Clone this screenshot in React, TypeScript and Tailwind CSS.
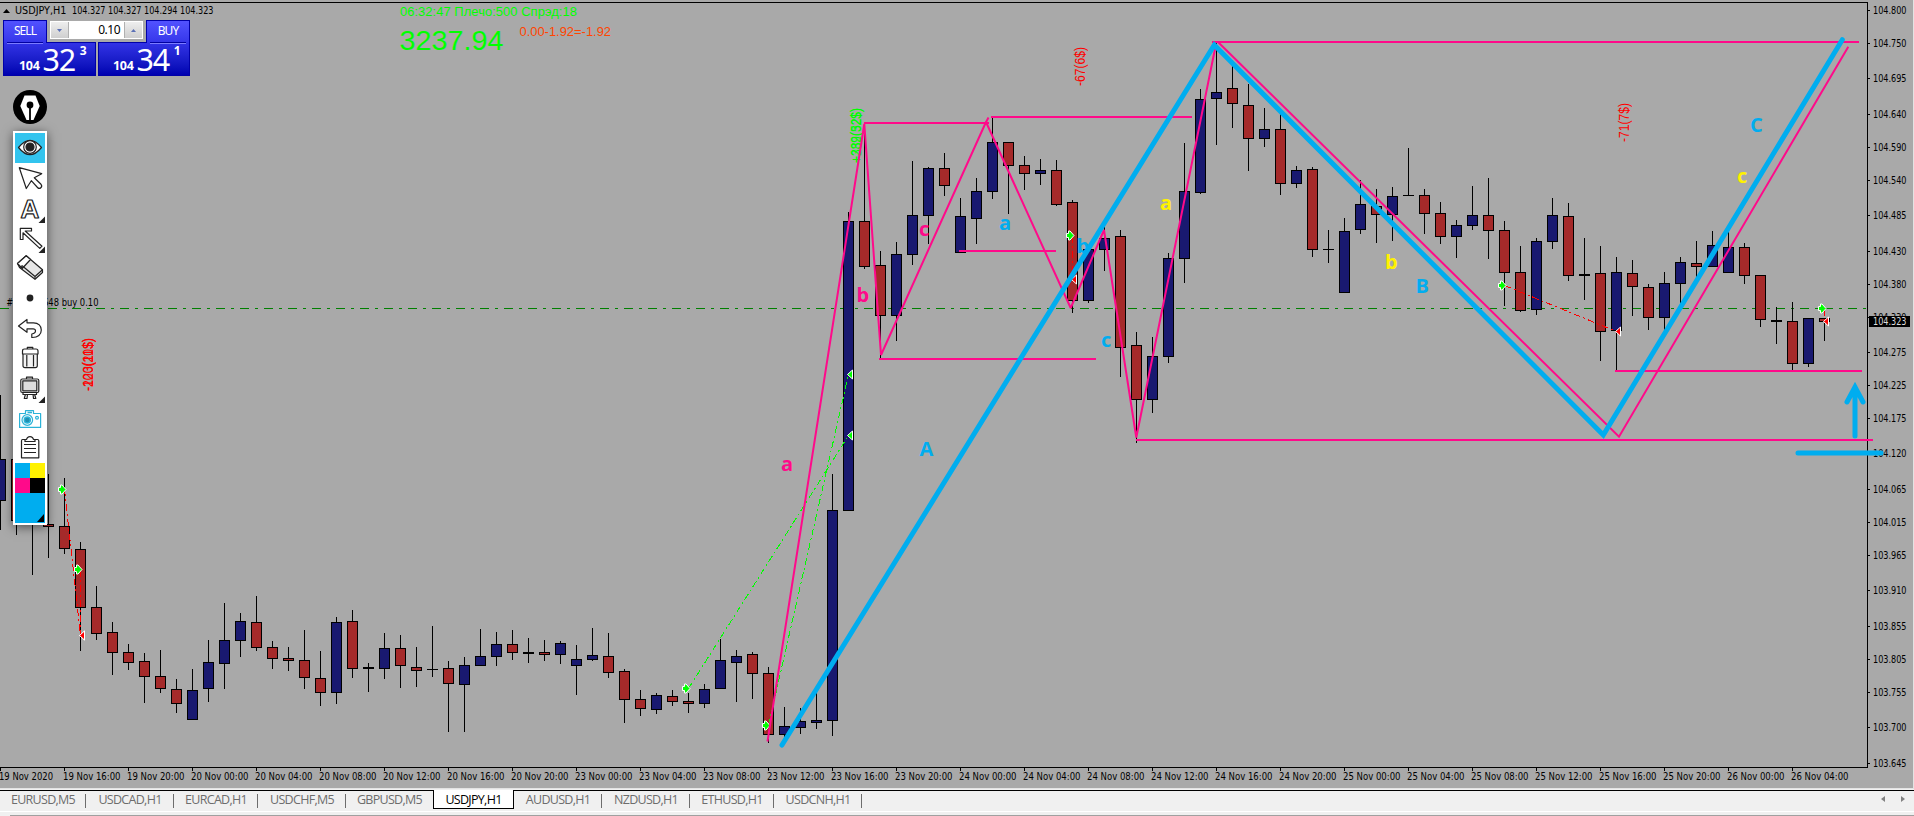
import type { ReactNode } from 'react';

type Candle = [high: number, top: number, bottom: number, low: number, up: 0 | 1];

const STEP = 16;

// one entry per hour, y values in chart pixels
const candles: Candle[] = [
  [395, 459, 501, 530, 1], [459, 459, 521, 535, 0], [470, 500, 520, 575, 0], [474, 524, 527, 558, 0],
  [478, 526, 549, 554, 0], [542, 549, 608, 651, 0], [586, 607, 634, 640, 0], [622, 632, 653, 675, 0],
  [644, 652, 663, 670, 0], [653, 661, 677, 703, 0], [650, 676, 689, 693, 0], [679, 689, 704, 713, 0],
  [669, 690, 720, 720, 1], [640, 662, 689, 702, 1], [603, 640, 664, 689, 1], [613, 621, 641, 657, 1],
  [596, 622, 648, 651, 0], [641, 647, 659, 669, 0], [647, 658, 661, 671, 0], [630, 660, 678, 689, 0],
  [651, 678, 693, 706, 0], [617, 622, 693, 704, 1], [610, 621, 669, 678, 0], [663, 667, 669, 692, 0],
  [633, 648, 669, 679, 1], [635, 648, 666, 688, 0], [647, 667, 671, 687, 0], [626, 669, 670, 677, 0],
  [661, 668, 684, 732, 0], [657, 665, 685, 732, 1], [629, 656, 666, 666, 1], [632, 644, 657, 666, 1],
  [630, 644, 653, 660, 0], [638, 652, 654, 663, 0], [640, 652, 655, 661, 0], [641, 643, 655, 664, 1],
  [645, 659, 666, 695, 1], [628, 655, 660, 661, 1], [633, 656, 673, 678, 0], [669, 671, 700, 723, 0],
  [690, 699, 709, 716, 0], [693, 695, 710, 714, 1], [690, 696, 702, 706, 0], [693, 701, 704, 713, 0],
  [684, 689, 704, 708, 1], [639, 660, 689, 689, 1], [650, 656, 663, 702, 1], [652, 654, 674, 699, 0],
  [667, 673, 735, 743, 0], [707, 726, 735, 737, 1], [708, 721, 728, 734, 1], [693, 720, 723, 729, 1],
  [474, 510, 721, 736, 1], [212, 221, 511, 511, 1], [123, 221, 267, 269, 0], [251, 265, 316, 358, 0],
  [242, 254, 316, 341, 1], [161, 215, 255, 265, 1], [167, 168, 216, 244, 1], [153, 168, 186, 196, 0],
  [198, 216, 253, 253, 1], [178, 191, 219, 244, 1], [118, 142, 192, 199, 1], [142, 142, 166, 214, 0],
  [156, 165, 174, 190, 0], [159, 170, 174, 185, 1], [160, 170, 205, 206, 0], [200, 202, 301, 313, 0],
  [249, 249, 301, 303, 1], [227, 238, 250, 271, 1], [230, 236, 348, 377, 0], [332, 345, 400, 443, 0],
  [337, 356, 400, 413, 1], [253, 258, 357, 363, 1], [143, 191, 259, 283, 1], [89, 99, 193, 194, 1],
  [43, 92, 99, 145, 1], [60, 88, 104, 128, 0], [84, 105, 139, 171, 0], [108, 129, 139, 147, 1],
  [114, 129, 184, 195, 0], [166, 170, 184, 188, 1], [167, 169, 250, 257, 0], [230, 249, 250, 263, 0],
  [218, 231, 293, 293, 1], [180, 204, 230, 234, 1], [189, 206, 215, 243, 0], [187, 196, 215, 241, 1],
  [148, 195, 196, 196, 1], [189, 195, 214, 234, 0], [202, 213, 237, 244, 0], [220, 225, 237, 258, 1],
  [186, 215, 226, 230, 1], [178, 215, 231, 259, 0], [221, 230, 273, 306, 0], [246, 272, 311, 312, 0],
  [238, 241, 310, 315, 1], [198, 215, 242, 249, 1], [203, 216, 276, 281, 0], [238, 274, 276, 300, 0],
  [246, 273, 332, 361, 0], [257, 272, 331, 370, 1], [260, 273, 287, 316, 0], [284, 287, 318, 330, 0],
  [272, 283, 318, 330, 1], [257, 262, 284, 304, 1], [241, 263, 267, 277, 0], [231, 245, 267, 267, 1],
  [230, 247, 273, 273, 1], [243, 247, 276, 284, 0], [275, 275, 320, 327, 0], [307, 320, 322, 344, 0],
  [302, 321, 364, 370, 0], [318, 318, 364, 367, 1], [318, 318, 322, 341, 0],
];

const prices: [string, number][] = [
  ['104.800', 10], ['104.750', 43], ['104.695', 78], ['104.640', 114], ['104.590', 147], ['104.540', 180],
  ['104.485', 215], ['104.430', 251], ['104.380', 284], ['104.330', 317], ['104.275', 352], ['104.225', 385],
  ['104.175', 418], ['104.120', 453], ['104.065', 489], ['104.015', 522], ['103.965', 555], ['103.910', 590],
  ['103.855', 626], ['103.805', 659], ['103.755', 692], ['103.700', 727], ['103.645', 763],
];

const times = [
  '19 Nov 2020', '19 Nov 16:00', '19 Nov 20:00', '20 Nov 00:00', '20 Nov 04:00', '20 Nov 08:00', '20 Nov 12:00',
  '20 Nov 16:00', '20 Nov 20:00', '23 Nov 00:00', '23 Nov 04:00', '23 Nov 08:00', '23 Nov 12:00', '23 Nov 16:00',
  '23 Nov 20:00', '24 Nov 00:00', '24 Nov 04:00', '24 Nov 08:00', '24 Nov 12:00', '24 Nov 16:00', '24 Nov 20:00',
  '25 Nov 00:00', '25 Nov 04:00', '25 Nov 08:00', '25 Nov 12:00', '25 Nov 16:00', '25 Nov 20:00', '26 Nov 00:00',
  '26 Nov 04:00',
];

const CYAN = '#00adef';
const PINK = '#ff0a8a';
const YELLOW = '#fff200';
const LIME = '#00ff00';
const RED = '#ff0000';

const trades: [number, number, number, number, string][] = [
  [64, 489, 80, 635, RED],
  [80, 569, 80, 635, RED],
  [688, 688, 848, 435, LIME],
  [768, 725, 848, 374, LIME],
  [1072, 235, 1072, 279, RED],
  [1504, 285, 1616, 331, RED],
  [1824, 308, 1824, 321, RED],
];

const waves: [string, number, number, string][] = [
  ['a', 781, 471, PINK], ['b', 856.5, 302, PINK], ['c', 919, 236, PINK],
  ['a', 999, 230, CYAN], ['b', 1076.5, 253, CYAN], ['c', 1101, 347, CYAN],
  ['A', 919.5, 456, CYAN], ['B', 1415.5, 293, CYAN], ['C', 1750, 132, CYAN],
  ['a', 1160, 210, YELLOW], ['b', 1385, 268.5, YELLOW], ['c', 1737, 182.5, YELLOW],
];

const profits: [string, number, number, number, string][] = [
  ['-123(11$)', 93, 391, 53, RED],
  ['-200(20$)', 93, 391, 53, RED],
  ['+339(52$)', 861, 163, 55, LIME],
  ['+282(32$)', 861, 163, 55, LIME],
  ['-67(6$)', 1085, 86, 39, RED],
  ['-71(7$)', 1629, 142, 39, RED],
];

const levels = [
  'M864 123H989', 'M991 117H1192', 'M959 251H1056', 'M879 359H1096',
  'M1136 440H1873', 'M1615 371H1862', 'M1212 42H1859',
];

type LabelProps = { x: number; y: number; w: number; size?: number; fill?: string; arial?: boolean; children: string };

const Label = ({ x, y, w, size = 10, fill = '#000', arial, children }: LabelProps) => (
  <text
    x={x}
    y={y}
    textLength={w}
    lengthAdjust="spacingAndGlyphs"
    fontSize={size}
    fill={fill}
    className={arial ? "font-['Liberation_Sans',sans-serif]" : "font-['DejaVu_Sans_Condensed','Noto_Sans',sans-serif]"}
    xmlSpace="preserve"
  >
    {children}
  </text>
);

const Chart = () => (
  <svg width="1913" height="788" viewBox="0 0 1913 788" className="block">
    <path d="M0 308.5H1866" stroke="#008000" strokeDasharray="9 6 3 6" />

    <g shapeRendering="crispEdges">
      {candles.map(([high, top, bottom, low, up], i) => {
        const x = i * STEP;
        const h = bottom - top;
        return (
          <g key={i}>
            <rect x={x} y={high} width="1" height={low - high} fill="#000" />
            <rect x={x - 5} y={top} width="11" height={h} fill="#000" />
            {h > 2 && <rect x={x - 4} y={top + 1} width="9" height={h - 2} fill={up ? '#191970' : '#a52a2a'} />}
          </g>
        );
      })}
    </g>

    <Label x={6.5} y={306} w={6.5}>#</Label>
    <Label x={43} y={306} w={55.5}>648 buy 0.10</Label>

    {trades.map(([x1, y1, x2, y2, color], i) => (
      <line key={i} x1={x1 + 0.5} y1={y1 + 0.5} x2={x2 + 0.5} y2={y2 + 0.5} stroke={color} strokeDasharray="7 3 2 3" shapeRendering="crispEdges" />
    ))}
    {trades.map(([x1, y1, x2, y2, color], i) => (
      <g key={i} stroke="#fff" strokeWidth="1">
        <path d={`M${x1 - 5.5} ${y1 - 1.5}h2v-2.5h1.5l4 4.5l-4 4.5h-1.5v-2.5h-2z`} fill={LIME} />
        <path d={`M${x2 - 0.5} ${y2 + 0.5}l5 -4.5v9z`} fill={color} />
      </g>
    ))}

    {profits.map(([text, x, y, w, color], i) => (
      <g key={i} transform={`translate(${x} ${y}) rotate(-90)`}>
        <Label x={0} y={0} w={w} size={14} fill={color} arial>{text}</Label>
      </g>
    ))}

    <Label x={400} y={16} w={177} size={13} fill={LIME} arial>06:32:47 Плечо:500 Спрэд:18</Label>
    <Label x={399.5} y={50} w={104} size={28} fill={LIME} arial>3237.94</Label>
    <Label x={519.5} y={36} w={91.5} size={13} fill="#ff4500" arial>0.00-1.92=-1.92</Label>

    <g shapeRendering="crispEdges">
      <path d="M0 2.5H1867.5V767.5H0" fill="none" stroke="#000" />
      {prices.map(([, y]) => <rect key={y} x="1868" y={y} width="2" height="1" />)}
      {times.map((t, i) => <rect key={t} x={i * 64} y="768" width="1" height="3" />)}
    </g>
    {prices.map(([p, y]) => <Label key={p} x={1873} y={y + 4} w={33.5}>{p}</Label>)}
    {times.map((t, i) => <Label key={t} x={i * 64 - 1} y={780} w={i ? 57.5 : 54}>{t}</Label>)}
    <rect x="1869" y="316" width="41" height="11" />
    <Label x={1873} y={325} w={33.5} fill="#dcdcdc">104.323</Label>

    {waves.map(([t, x, y, color], i) => (
      <text key={i} x={x} y={y} fontSize="20" fill={color} className="font-['Open_Sans','Noto_Sans',sans-serif] font-bold">{t}</text>
    ))}

    <g fill="none" stroke={PINK} strokeWidth="2">
      {levels.map((d) => <path key={d} d={d} />)}
      <path d="M767.5 741.5L864.3 124L881 355L986 122L1070.7 308L1104 230L1136.3 437.5L1216 44" strokeLinejoin="bevel" />
      <path d="M985 124L988.5 117.5M1218.5 42.5L1619 436.7L1848.3 46.7" />
    </g>
    <g fill="none" stroke={CYAN} strokeWidth="5" strokeLinecap="round">
      <path d="M782 745L1214.3 45L1603.3 435L1842.3 39.7" />
      <path d="M1855 436V387M1847 402L1855 387L1863 402M1798 453H1881" />
    </g>
  </svg>
);

const QuoteSide = ({ name, pip, point, right }: { name: string; pip: string; point: string; right?: boolean }) => (
  <div className={`relative h-14 pt-[22px] ${right ? 'w-[92px]' : 'w-[93px]'}`}>
    <div className="flex h-[34px] items-end border border-[#0000a8] bg-linear-to-b from-[#3232e6] to-[#0000b0] text-white">
      <span className={`mb-[2px] text-[12.5px] leading-[14px] font-bold tracking-[-0.3px] ${right ? 'ml-[14px]' : 'ml-[15px]'}`}>104</span>
      <span className="ml-[3px] text-[30.5px] leading-[31px] tracking-[-1.3px]">{pip}</span>
      <span className="mb-[17px] ml-[5px] text-[12px] leading-[14px] font-bold">{point}</span>
    </div>
    <div className={`absolute top-0 h-[23px] w-11 border border-b-0 border-[#0000a8] bg-linear-to-b from-[#5252ff] to-[#3535e9] ${right ? 'right-0' : 'left-0'}`}>
      <p className="pt-px pb-px text-center text-[12px] leading-[17px] tracking-[-0.9px] text-white">{name}</p>
      <div className="mx-[3px] mt-[2px] h-[2px] border-t border-b border-t-[#0000a0] border-b-[#7c7cff]" />
    </div>
  </div>
);

const TradePanel = () => (
  <div className="absolute top-5 left-[3px] flex gap-[2px] font-['Noto_Sans',sans-serif]">
    <QuoteSide name="SELL" pip="32" point="3" />
    <QuoteSide name="BUY" pip="34" point="1" right />
    <div className="absolute top-px left-[47px] flex h-[18px] w-[93px] border border-white bg-white">
      <div className="flex w-[18px] items-center justify-center border-r border-[#b0b0b0] bg-linear-to-b from-[#eeeeee] to-[#cfcfcf]">
        <svg width="5" height="3"><path d="M0 0H5L2.5 3z" fill="#5b70b5" /></svg>
      </div>
      <p className="flex-1 pr-1 text-right text-[12px] leading-4 tracking-[-0.5px] text-black">0.10</p>
      <div className="flex w-[18px] items-center justify-center border-l border-[#b0b0b0] bg-linear-to-b from-[#eeeeee] to-[#cfcfcf]">
        <svg width="5" height="3"><path d="M0 3H5L2.5 0z" fill="#5b70b5" /></svg>
      </div>
    </div>
  </div>
);

const Tool = ({ active, more, children }: { active?: boolean; more?: boolean; children: ReactNode }) => (
  <svg
    width="30"
    height="30"
    viewBox="0 0 30 30"
    className={`block ${active ? 'bg-[#33c4ee]' : ''}`}
    fill="#fff"
    stroke="#222"
    strokeWidth="1.2"
    strokeLinejoin="round"
  >
    {children}
    {more && <path d="M30 23.5V30H23.5z" fill="#222" stroke="none" />}
  </svg>
);

const Toolbar = () => (
  <div className="absolute top-[131px] left-[13px] w-[34px] bg-white p-[2px] shadow-[0_2px_10px_rgba(0,0,0,0.55)]">
    <Tool active>
      <path d="M3.5 14.5C8 9 11 7.3 15 7.3S22 9 26.5 14.5C22 20 19 21.7 15 21.7S8 20 3.5 14.5z" />
      <circle cx="15" cy="14" r="6.3" />
      <circle cx="15" cy="14" r="4" fill="#222" />
    </Tool>
    <Tool>
      <path d="M4.3 4.7L26.7 10.7L19.3 14.7L26 21.3Q27.5 23 25.8 24.8Q24.2 26.3 22.5 24.5L16.3 17.7L11.3 25.5z" />
    </Tool>
    <Tool more>
      <text x="15" y="25" textAnchor="middle" fontSize="26" className="font-['Liberation_Sans',sans-serif] font-bold">A</text>
    </Tool>
    <Tool more>
      <path d="M5.3 5.3H16.5V8H10.2L27 23.2L24.8 25.4L8 9.8V16.5H5.3z" />
    </Tool>
    <Tool>
      <path d="M11.2 2.8L27.5 16.8V19.5L20 26.2L4.5 14.5L2.5 10.5z" fill="#e6e6e6" />
      <path d="M11.2 2.8L15.5 6.5L7.2 15.5L2.5 10.5z" />
      <path d="M4.5 14.5L7.2 12.8L20 23.5L27.5 16.8M20 23.5V26.2" fill="none" />
    </Tool>
    <Tool>
      <circle cx="15" cy="15" r="3.4" fill="#222" stroke="none" />
    </Tool>
    <Tool>
      <path d="M3.5 13L12 6.5V9.8H18.5C23.5 9.8 26.3 13 26.3 17C26.3 21.5 23 24.7 16.8 24.5V21Q20.5 20.5 20.5 17.8Q20.5 15.8 18 15.8H12V19.3z" />
    </Tool>
    <Tool>
      <path d="M12.3 6V4.4H17.8V6M8 11V22.8Q8 24.6 10 24.6H20.3Q22.3 24.6 22.3 22.8V11M11.8 12V23.5M18.5 12V23.5" fill="#f3f3f3" />
      <path d="M7.5 11V8Q7.5 6 9.5 6H21Q23 6 23 8V11z" />
    </Tool>
    <Tool more>
      <path d="M11.5 6V4.2H17.5V6M10.5 21L9.3 25.5H12L12.5 21M18 21L18.5 25.5H20.8L19.5 21" />
      <rect x="5.8" y="6" width="18" height="13.5" rx="1.5" />
      <rect x="7.8" y="7.8" width="14" height="10" fill="#ddd" />
      <path d="M8 19.5H21.5V21.5H8z" />
    </Tool>
    <Tool>
      <g stroke="#2cb3d8">
        <path d="M4.6 10.5H10.5V7.6H18.5V10.5H25.6V24.4H4.6z" />
        <path d="M12.5 9.5H17" strokeWidth="1.6" />
        <circle cx="12.3" cy="17" r="5.3" />
        <circle cx="12.3" cy="17" r="3" fill="#1f8fb0" strokeWidth="1.5" />
        <circle cx="22" cy="14.7" r="1.4" />
      </g>
    </Tool>
    <Tool>
      <path d="M7.5 6.5H22.5Q23.8 6.5 23.8 8V24.8H6.5V8Q6.5 6.5 7.5 6.5z" />
      <path d="M10 8.5V7Q12 6.5 12.3 4.8Q15 2.6 17.7 4.8Q18 6.5 20 7V8.5z" />
      <path d="M9 11.5H21M9 15.5H21M9 19.5H21" />
    </Tool>
    <div className="grid grid-cols-2">
      <div className="h-[15px] bg-[#00adef]" />
      <div className="h-[15px] bg-[#fff200]" />
      <div className="h-[15px] bg-[#ff0a8a]" />
      <div className="h-[15px] bg-black" />
    </div>
    <div className="flex h-[30px] items-end justify-end bg-[#00adef] pr-px pb-px">
      <svg width="7" height="8"><path d="M7 0V8H0z" /></svg>
    </div>
  </div>
);

const tabs: [string, string][] = [
  ['EURUSD,M5', 'w-[86px]'],
  ['USDCAD,H1', 'w-[88px]'],
  ['EURCAD,H1', 'w-[84px]'],
  ['USDCHF,M5', 'w-[88px]'],
  ['GBPUSD,M5', 'w-[87px]'],
  ['USDJPY,H1', 'w-[81px]'],
  ['AUDUSD,H1', 'w-[88px]'],
  ['NZDUSD,H1', 'w-[88px]'],
  ['ETHUSD,H1', 'w-[84px]'],
  ['USDCNH,H1', 'w-[88px]'],
];

const TabBar = () => (
  <footer className="flex h-7 flex-col border-t border-[#e3e3e3] bg-[#f0f0f0]">
    <div className="flex h-[21px] shrink-0 pt-px font-['Open_Sans','Noto_Sans',sans-serif] text-[12.5px] leading-[17px] tracking-[-0.7px]">
      {tabs.map(([name, width], i) =>
        name === 'USDJPY,H1' ? (
          <div key={name} className={`h-[19px] border border-t-0 border-black bg-white text-center whitespace-nowrap text-black ${width}`}>
            <span className="inline-block pt-px">{name}</span>
          </div>
        ) : (
          <div key={name} className={`relative h-5 border-t border-black text-center whitespace-nowrap text-[#6d6d6d] ${width}`}>
            <span className="inline-block">{name}</span>
            {i !== 4 && <span className="absolute top-[3px] right-0 h-[14px] w-px bg-[#6d6d6d]" />}
          </div>
        ),
      )}
      <div className="flex h-5 flex-1 items-center justify-end gap-4 border-t border-black pr-[9px] pb-[3px]">
        <svg width="4" height="6"><path d="M4 0V6L0 3z" fill="#808080" /></svg>
        <svg width="4" height="6"><path d="M0 0V6L4 3z" fill="#808080" /></svg>
      </div>
    </div>
    <div className="mt-px h-px shrink-0 bg-white" />
    <div className="mt-[3px] ml-[10px] h-[2px] shrink-0 border-t border-l border-[#a0a0a0] bg-white" />
  </footer>
);

export default function App() {
  return (
    <div className="flex h-[816px] w-[1914px] flex-col overflow-hidden bg-[#a9a9a9]">
      <main className="relative h-[788px] border-r border-[#e3e3e3]">
        <Chart />
        <svg width="230" height="20" viewBox="0 0 230 20" className="absolute top-0 left-0">
          <path d="M3 13H10L6.5 9z" />
          <Label x={15} y={14} w={51.5}>USDJPY,H1</Label>
          <Label x={72} y={14} w={141.5}>104.327 104.327 104.294 104.323</Label>
        </svg>
        <TradePanel />
        <svg width="34" height="34" viewBox="0 0 34 34" className="absolute top-[90px] left-[13px]">
          <circle cx="17" cy="17" r="17" />
          <path d="M11.5 5.5H22.5L26.7 16L20.5 30H13.5L7.3 16z" fill="#fff" />
          <circle cx="17" cy="15" r="3.4" />
          <path d="M17 15V31" stroke="#000" strokeWidth="1.8" />
        </svg>
        <Toolbar />
      </main>
      <TabBar />
    </div>
  );
}
